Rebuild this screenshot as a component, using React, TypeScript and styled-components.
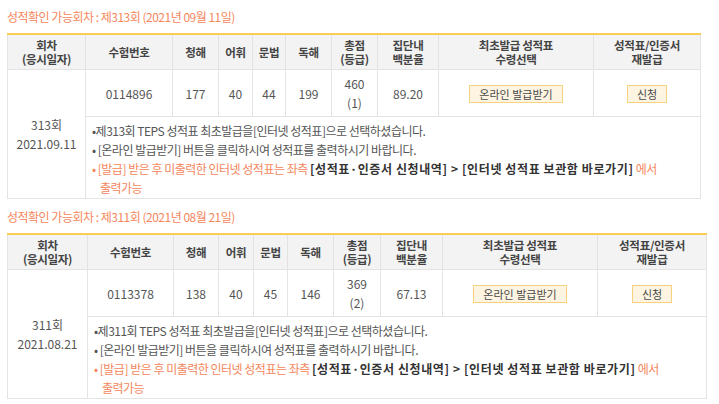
import React from 'react'
import styled, { createGlobalStyle } from 'styled-components'

const COLORS = {
  orange: '#f4875c',
  yellow: '#f7cd55',
  line: '#e3e3e3',
  head: '#f3f3f3',
  text: '#555555',
  dark: '#333333',
}

const GlobalStyle = createGlobalStyle`
  html, body {
    margin: 0;
    padding: 0;
    background: #ffffff;
  }
  body {
    font-family: "Noto Sans CJK KR", "Noto Sans", sans-serif;
    color: ${COLORS.text};
  }
`

const Page = styled.div`
  display: flex;
  flex-direction: column;
  gap: 9px;
  padding: 8px 0 0 7px;
  width: 719px;
  box-sizing: border-box;
`

const Section = styled.section`
  display: flex;
  flex-direction: column;
  gap: 7px;
`

const Title = styled.h3`
  margin: 0;
  height: 18px;
  line-height: 18px;
  font-size: 12px;
  font-weight: normal;
  color: ${COLORS.orange};
  letter-spacing: -0.5px;
`

const Table = styled.table<{ $width: number }>`
  width: ${(p) => p.$width}px;
  border-collapse: collapse;
  table-layout: fixed;
  border-top: 2px solid ${COLORS.yellow};
  font-size: 12px;
`

const Th = styled.th`
  height: 34px;
  padding: 0;
  background: ${COLORS.head};
  border: 1px solid ${COLORS.line};
  border-top: none;
  color: #444;
  font-weight: bold;
  font-size: 11.5px;
  line-height: 14px;
  text-align: center;
  vertical-align: middle;
  letter-spacing: -0.3px;
`

const Td = styled.td`
  height: 46px;
  padding: 0;
  border: 1px solid ${COLORS.line};
  text-align: center;
  vertical-align: middle;
  line-height: 19px;
  color: ${COLORS.text};
`

const NoteCell = styled.td`
  padding: 4px 0 1px 6px;
  border: 1px solid ${COLORS.line};
  vertical-align: top;
  text-align: left;
`

const NoteList = styled.ul`
  margin: 0;
  padding: 0;
  list-style: none;
  display: flex;
  flex-direction: column;
`

const Note = styled.li<{ $accent?: boolean }>`
  line-height: 19px;
  padding-left: 8px;
  text-indent: -8px;
  letter-spacing: -0.5px;
  color: ${(p) => (p.$accent ? COLORS.orange : COLORS.text)};
`

const Strong = styled.b`
  color: ${COLORS.dark};
  letter-spacing: 0.6px;
`

const IssueButton = styled.button<{ $wide?: boolean }>`
  width: ${(p) => (p.$wide ? 94 : 40)}px;
  height: 18px;
  padding: 0;
  border: 1px solid #f8d27c;
  background: #fdf4e2;
  color: #4a4a4a;
  font-family: inherit;
  font-size: 11px;
  line-height: 16px;
  cursor: pointer;
`

type Round = {
  no: string
  title: string
  date: string
  examNo: string
  listening: number
  vocab: number
  grammar: number
  reading: number
  total: number
  grade: number
  percent: string
  widths: number[]
}

const rounds: Round[] = [
  {
    no: '313',
    title: '(2021년 09월 11일)',
    date: '2021.09.11',
    examNo: '0114896',
    listening: 177,
    vocab: 40,
    grammar: 44,
    reading: 199,
    total: 460,
    grade: 1,
    percent: '89.20',
    widths: [78, 87, 46, 34, 33, 46, 46, 61, 155, 107],
  },
  {
    no: '311',
    title: '(2021년 08월 21일)',
    date: '2021.08.21',
    examNo: '0113378',
    listening: 138,
    vocab: 40,
    grammar: 45,
    reading: 146,
    total: 369,
    grade: 2,
    percent: '67.13',
    widths: [80, 86, 45, 35, 34, 46, 47, 62, 155, 109],
  },
]

const RoundTable = ({ r }: { r: Round }) => {
  const width = r.widths.reduce((a, b) => a + b, 0)
  return (
    <Section>
      <Title>
        성적확인 가능회차 : 제{r.no}회 {r.title}
      </Title>
      <Table $width={width}>
        <colgroup>
          {r.widths.map((w, i) => (
            <col key={i} style={{ width: w }} />
          ))}
        </colgroup>
        <thead>
          <tr>
            <Th>
              회차
              <br />
              (응시일자)
            </Th>
            <Th>수험번호</Th>
            <Th>청해</Th>
            <Th>어휘</Th>
            <Th>문법</Th>
            <Th>독해</Th>
            <Th>
              총점
              <br />
              (등급)
            </Th>
            <Th>
              집단내
              <br />
              백분율
            </Th>
            <Th>
              최초발급 성적표
              <br />
              수령선택
            </Th>
            <Th>
              성적표/인증서
              <br />
              재발급
            </Th>
          </tr>
        </thead>
        <tbody>
          <tr>
            <Td rowSpan={2}>
              {r.no}회
              <br />
              {r.date}
            </Td>
            <Td>{r.examNo}</Td>
            <Td>{r.listening}</Td>
            <Td>{r.vocab}</Td>
            <Td>{r.grammar}</Td>
            <Td>{r.reading}</Td>
            <Td>
              {r.total}
              <br />({r.grade})
            </Td>
            <Td>{r.percent}</Td>
            <Td>
              <IssueButton $wide>온라인 발급받기</IssueButton>
            </Td>
            <Td>
              <IssueButton>신청</IssueButton>
            </Td>
          </tr>
          <tr>
            <NoteCell colSpan={9}>
              <NoteList>
                <Note>•제{r.no}회 TEPS 성적표 최초발급을[인터넷 성적표]으로 선택하셨습니다.</Note>
                <Note>• [온라인 발급받기] 버튼을 클릭하시여 성적표를 출력하시기 바랍니다.</Note>
                <Note $accent>
                  • [발급] 받은 후 미출력한 인터넷 성적표는 좌측{' '}
                  <Strong>[성적표·인증서 신청내역] &gt; [인터넷 성적표 보관함 바로가기]</Strong> 에서
                  <br />
                  출력가능
                </Note>
              </NoteList>
            </NoteCell>
          </tr>
        </tbody>
      </Table>
    </Section>
  )
}

export default function App() {
  return (
    <>
      <GlobalStyle />
      <Page>
        {rounds.map((r) => (
          <RoundTable key={r.no} r={r} />
        ))}
      </Page>
    </>
  )
}
